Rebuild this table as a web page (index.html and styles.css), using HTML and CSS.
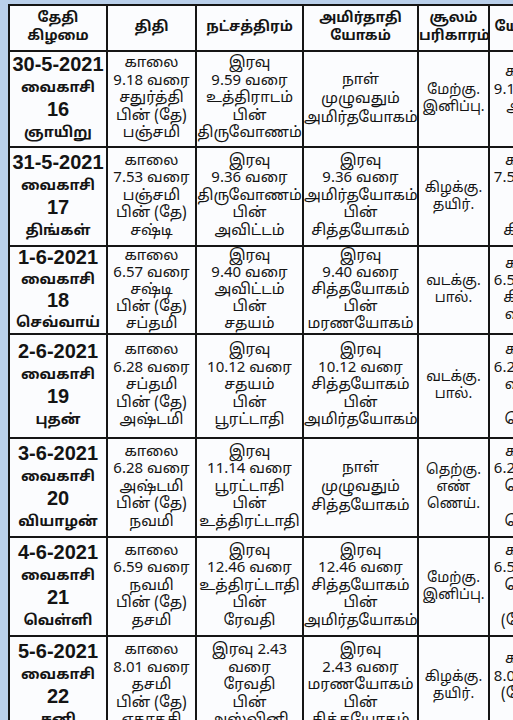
FILE: index.html
```html
<!DOCTYPE html>
<html lang="ta">
<head>
<meta charset="utf-8">
<title>பஞ்சாங்கம்</title>
<link rel="stylesheet" href="styles.css">
</head>
<body>
<div class="sheet">
<table class="cal">
<colgroup>
<col class="c-date"><col class="c-tithi"><col class="c-star"><col class="c-yoga"><col class="c-soolam"><col class="c-yogini">
</colgroup>
<thead>
<tr class="head">
<th>தேதி<br>கிழமை</th>
<th>திதி</th>
<th>நட்சத்திரம்</th>
<th>அமிர்தாதி<br>யோகம்</th>
<th>சூலம்<br>பரிகாரம்</th>
<th>யோகினி</th>
</tr>
</thead>
<tbody>
<tr class="r1">
<td class="date">30-5-2021<br><span class="ta">வைகாசி</span><br>16<br><span class="ta">ஞாயிறு</span></td>
<td>காலை<br>9.18 வரை<br>சதுர்த்தி<br>பின் (தே)<br>பஞ்சமி</td>
<td>இரவு<br>9.59 வரை<br>உத்திராடம்<br>பின்<br>திருவோணம்</td>
<td class="wide">நாள்<br>முழுவதும்<br>அமிர்தயோகம்</td>
<td class="soolam">மேற்கு.<br>இனிப்பு.</td>
<td>காலை<br>9.18 வரை<br>அக்னி<br><br></td>
</tr>
<tr class="r2">
<td class="date">31-5-2021<br><span class="ta">வைகாசி</span><br>17<br><span class="ta">திங்கள்</span></td>
<td>காலை<br>7.53 வரை<br>பஞ்சமி<br>பின் (தே)<br>சஷ்டி</td>
<td>இரவு<br>9.36 வரை<br>திருவோணம்<br>பின்<br>அவிட்டம்</td>
<td>இரவு<br>9.36 வரை<br>அமிர்தயோகம்<br>பின்<br>சித்தயோகம்</td>
<td class="soolam">கிழக்கு.<br>தயிர்.</td>
<td>காலை<br>7.53 வரை<br>பூமி<br>பின்<br>கிழக்கு</td>
</tr>
<tr class="r3">
<td class="date">1-6-2021<br><span class="ta">வைகாசி</span><br>18<br><span class="ta">செவ்வாய்</span></td>
<td>காலை<br>6.57 வரை<br>சஷ்டி<br>பின் (தே)<br>சப்தமி</td>
<td>இரவு<br>9.40 வரை<br>அவிட்டம்<br>பின்<br>சதயம்</td>
<td>இரவு<br>9.40 வரை<br>சித்தயோகம்<br>பின்<br>மரணயோகம்</td>
<td class="soolam">வடக்கு.<br>பால்.</td>
<td>காலை<br>6.57 வரை<br>கிழக்கு<br>வடக்கு</td>
</tr>
<tr class="r4">
<td class="date">2-6-2021<br><span class="ta">வைகாசி</span><br>19<br><span class="ta">புதன்</span></td>
<td>காலை<br>6.28 வரை<br>சப்தமி<br>பின் (தே)<br>அஷ்டமி</td>
<td>இரவு<br>10.12 வரை<br>சதயம்<br>பின்<br>பூரட்டாதி</td>
<td>இரவு<br>10.12 வரை<br>சித்தயோகம்<br>பின்<br>அமிர்தயோகம்</td>
<td class="soolam">வடக்கு.<br>பால்.</td>
<td>காலை<br>6.28 வரை<br>வடக்கு<br><br>தெற்கு</td>
</tr>
<tr class="r5">
<td class="date">3-6-2021<br><span class="ta">வைகாசி</span><br>20<br><span class="ta">வியாழன்</span></td>
<td>காலை<br>6.28 வரை<br>அஷ்டமி<br>பின் (தே)<br>நவமி</td>
<td>இரவு<br>11.14 வரை<br>பூரட்டாதி<br>பின்<br>உத்திரட்டாதி</td>
<td class="wide">நாள்<br>முழுவதும்<br>சித்தயோகம்</td>
<td class="soolam">தெற்கு.<br>எண்<br>ணெய்.</td>
<td>காலை<br>6.28 வரை<br>தெற்கு<br><br>தெற்கு</td>
</tr>
<tr class="r6">
<td class="date">4-6-2021<br><span class="ta">வைகாசி</span><br>21<br><span class="ta">வெள்ளி</span></td>
<td>காலை<br>6.59 வரை<br>நவமி<br>பின் (தே)<br>தசமி</td>
<td>இரவு<br>12.46 வரை<br>உத்திரட்டாதி<br>பின்<br>ரேவதி</td>
<td>இரவு<br>12.46 வரை<br>சித்தயோகம்<br>பின்<br>அமிர்தயோகம்</td>
<td class="soolam">மேற்கு.<br>இனிப்பு.</td>
<td>காலை<br>6.59 வரை<br>தெற்கு<br><br>(மேற்கு)</td>
</tr>
<tr class="r7">
<td class="date">5-6-2021<br><span class="ta">வைகாசி</span><br>22<br><span class="ta">சனி</span></td>
<td>காலை<br>8.01 வரை<br>தசமி<br>பின் (தே)<br>ஏகாதசி</td>
<td>இரவு 2.43<br>வரை<br>ரேவதி<br>பின்<br>அஸ்வினி</td>
<td>இரவு<br>2.43 வரை<br>மரணயோகம்<br>பின்<br>சித்தயோகம்</td>
<td class="soolam">கிழக்கு.<br>தயிர்.</td>
<td>காலை<br>8.01 வரை<br>(மேற்கு)<br><br></td>
</tr>
</tbody>
</table>
</div>
</body>
</html>
```
FILE: styles.css
```css
html, body {
  margin: 0;
  padding: 0;
  overflow: hidden;
  background: #b9cfea;
}
body {
  width: 513px;
  height: 720px;
}
.sheet {
  padding: 4px 0 0 8px;
  width: 620px;
}
.cal {
  border-collapse: collapse;
  table-layout: fixed;
  width: 566px;
  background: #fbfcfe;
  color: #141414;
  font-family: "Noto Sans Tamil", "Lohit Tamil", "Noto Sans", "Liberation Sans", sans-serif;
  font-size: 15px;
  line-height: 17.5px;
  text-align: center;
}
.c-date { width: 98px; }
.c-tithi { width: 89px; }
.c-star { width: 107px; }
.c-yoga { width: 115px; }
.c-soolam { width: 71px; }
.c-yogini { width: 86px; }
.cal th, .cal td {
  border: 2px solid #151515;
  padding: 0;
  vertical-align: middle;
  overflow: hidden;
  white-space: nowrap;
}
.cal th {
  font-weight: 700;
  font-size: 14px;
  line-height: 18px;
}
.head { height: 46px; }
.cal td.date {
  font-family: "Liberation Sans", "Noto Sans Tamil", "Lohit Tamil", sans-serif;
  font-weight: 700;
  font-size: 20px;
  line-height: 21px;
}
.cal td.date .ta {
  font-family: "Noto Sans Tamil", "Lohit Tamil", sans-serif;
  font-size: 14.5px;
}
.cal td.wide { line-height: 19px; }
.cal td.soolam { font-size: 14px; line-height: 17px; }
.r1 { height: 96px; }
.r2 { height: 99px; }
.r3 { height: 86px; }
.r3 td { line-height: 17px; }
.cal .r3 td.date { line-height: 20px; }
.r4 { height: 104px; }
.r5 { height: 99px; }
.r6 { height: 99px; }
.r7 { height: 100px; }
```
